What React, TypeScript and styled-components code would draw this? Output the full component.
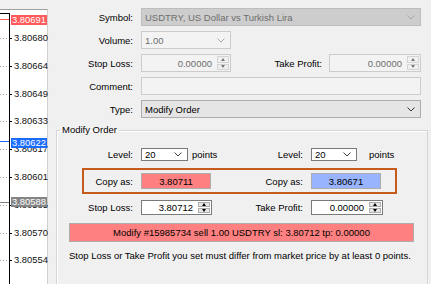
import React from "react";
import styled, { createGlobalStyle } from "styled-components";

const GlobalStyle = createGlobalStyle`
  body {
    margin: 0;
    background: #f0f0f0;
  }
`

const Screen = styled.div`
  display: flex;
  width: 431px;
  height: 284px;
  overflow: hidden;
  background: #f0f0f0;
  font-family: "Liberation Sans", Arial, sans-serif;
  font-size: 9.5px;
  color: #000;
`

/* ---------- chart strip ---------- */

const ChartStrip = styled.div`
  width: 48px;
  flex-shrink: 0;
  padding-top: 9px;
  box-sizing: border-box;
`

const ChartWindow = styled.div`
  position: relative;
  display: flex;
  height: 100%;
  background: #fff;
  border-top: 1px solid #a0a0a0;
  border-right: 1px solid #d0d0d0;
`

const PlotSvg = styled.svg`
  display: block;
  flex-shrink: 0;
`

const Axis = styled.div`
  display: flex;
  flex-direction: column;
  padding-top: 14px;
`

const AxisTick = styled.div`
  height: 27.8px;
  line-height: 27.8px;
  padding-left: 2px;
  font-size: 9.4px;
  color: #111;
`

const PriceTag = styled.div<{ $bg: string; $top: number }>`
  position: absolute;
  left: 11px;
  top: ${p => p.$top}px;
  width: 36px;
  height: 10px;
  line-height: 10px;
  background: ${p => p.$bg};
  color: #fff;
  font-size: 9.4px;
  text-align: center;
`

/* ---------- dialog ---------- */

const Dialog = styled.div`
  flex: 1;
  display: flex;
  flex-direction: column;
`

const Form = styled.div`
  display: grid;
  grid-template-columns: 85px 280px;
  grid-auto-rows: 18px;
  column-gap: 8px;
  row-gap: 5px;
  padding-top: 8px;
`

const Label = styled.div<{ $w?: number; $fill?: boolean }>`
  display: flex;
  align-items: center;
  justify-content: flex-end;
  ${p => p.$w ? `width: ${p.$w}px; flex-shrink: 0;` : ""}
  ${p => p.$fill ? "flex: 1; align-self: stretch; margin-right: 7px;" : ""}
  white-space: nowrap;
`

const FieldRow = styled.div`
  display: flex;
  align-items: center;
`

const Box = styled.div<{
  $bg: string;
  $border: string;
  $color?: string;
  $w?: number;
  $h?: number;
}>`
  display: flex;
  align-items: center;
  box-sizing: border-box;
  width: ${p => p.$w ? `${p.$w}px` : "100%"};
  height: ${p => p.$h ? `${p.$h}px` : "100%"};
  flex-shrink: 0;
  background: ${p => p.$bg};
  border: 1px solid ${p => p.$border};
  color: ${p => p.$color || "#000"};
  white-space: nowrap;
  overflow: hidden;
`

const BoxText = styled.span<{ $align?: "left" | "right" | "center" }>`
  flex: 1;
  padding: 0 3px;
  text-align: ${p => p.$align || "left"};
`

const Chevron = styled.svg`
  flex-shrink: 0;
  margin-right: 5px;
`

const SpinWrap = styled.div`
  display: flex;
  flex-direction: column;
  align-self: stretch;
  width: 12px;
  flex-shrink: 0;
  margin: 1px 1px 1px 2px;
  gap: 1px;
`

const SpinButton = styled.div<{ $bg: string; $line: string }>`
  flex: 1;
  display: flex;
  align-items: center;
  justify-content: center;
  background: ${p => p.$bg};
  border: 1px solid ${p => p.$line};
`

const Arrow = styled.span<{ $up?: boolean; $c: string }>`
  width: 0;
  height: 0;
  border-left: 2.5px solid transparent;
  border-right: 2.5px solid transparent;
  ${p => p.$up
    ? `border-bottom: 3px solid ${p.$c};`
    : `border-top: 3px solid ${p.$c};`}
`

const GroupBox = styled.fieldset`
  margin: 6px 3px 0 8px;
  padding: 8px 0 80px;
  border: 1px solid #d5d5d5;
  box-shadow: inset 1px 1px 0 #fff;
  min-width: 0;
`

const GroupTitle = styled.legend`
  margin-left: 3px;
  padding: 0 2px;
  line-height: 12px;
`

const PairRow = styled.div<{ $h: number; $mt?: number }>`
  position: relative;
  display: flex;
  align-items: center;
  height: ${p => p.$h}px;
  margin-top: ${p => p.$mt || 0}px;
`

const Highlight = styled.div`
  position: absolute;
  left: 25px;
  top: 0;
  width: 315px;
  height: 100%;
  box-sizing: border-box;
  border: 2px solid #c55a1a;
  pointer-events: none;
`

const Half = styled.div`
  display: flex;
  align-items: center;
  width: 170px;
  flex-shrink: 0;
  gap: 8px;
`

const Unit = styled.span<{ $ml: number }>`
  margin-left: ${p => p.$ml}px;
`

const ModifyButton = styled.div`
  margin: 7px 13px 0 12px;
  height: 19px;
  box-sizing: border-box;
  display: flex;
  align-items: center;
  justify-content: center;
  background: #ff8080;
  border: 1px solid #adadad;
  white-space: nowrap;
`

const Note = styled.div`
  margin: 8px 0 0 12px;
  line-height: 12px;
  white-space: nowrap;
`

const ChevronIcon = ({ color }: { color: string }) => (
  <Chevron width="8" height="5" viewBox="0 0 8 5">
    <polyline points="0.5,0.5 4,4 7.5,0.5" fill="none" stroke={color} strokeWidth="1" />
  </Chevron>
)

const Spinner = ({ active }: { active?: boolean }) => {
  const bg = active ? "#e6e6e6" : "#f0f0f0"
  const line = active ? "#adadad" : "#d4d4d4"
  const c = active ? "#000" : "#7a7a7a"
  return (
    <SpinWrap>
      <SpinButton $bg={bg} $line={line}><Arrow $up $c={c} /></SpinButton>
      <SpinButton $bg={bg} $line={line}><Arrow $c={c} /></SpinButton>
    </SpinWrap>
  )
}

const axisPrices = [
  "3.80680", "3.80664", "3.80649", "3.80633", "3.80617",
  "3.80601", "3.80585", "3.80570", "3.80554", "3.80538",
]

const ChartPanel = () => {
  const rows = axisPrices.map((_, i) => 28 + i * 27.8)
  return (
    <ChartStrip>
      <ChartWindow>
        <PlotSvg width="12" height="275" viewBox="0 0 12 275">
          <line x1="0" y1="3.5" x2="9" y2="3.5" stroke="#000" />
          <line x1="9.5" y1="3" x2="9.5" y2="275" stroke="#000" />
          {rows.map(y => (
            <g key={y}>
              <line x1="0" y1={Math.round(y) + 0.5} x2="8" y2={Math.round(y) + 0.5}
                stroke="#a8a8a8" strokeDasharray="1 2" />
              <line x1="10" y1={Math.round(y) + 0.5} x2="12" y2={Math.round(y) + 0.5} stroke="#000" />
            </g>
          ))}
          <line x1="0" y1="9.5" x2="9" y2="9.5" stroke="#ff5a5a" />
          <line x1="0" y1="131.5" x2="9" y2="131.5" stroke="#1a6cff" />
          <line x1="0" y1="192.5" x2="9" y2="192.5" stroke="#808080" />
        </PlotSvg>
        <Axis>
          {axisPrices.map(p => <AxisTick key={p}>{p}</AxisTick>)}
        </Axis>
        <PriceTag $bg="#ff5a5a" $top={5}>3.80691</PriceTag>
        <PriceTag $bg="#1a6cff" $top={128}>3.80622</PriceTag>
        <PriceTag $bg="#858585" $top={187}>3.80588</PriceTag>
      </ChartWindow>
    </ChartStrip>
  )
}

const App = (): JSX.Element => {
  return (
    <>
      <GlobalStyle />
      <Screen>
        <ChartPanel />
        <Dialog>
          <Form>
            <Label>Symbol:</Label>
            <Box $bg="#cdcdcd" $border="#bdbdbd" $color="#6d6d6d">
              <BoxText>USDTRY, US Dollar vs Turkish Lira</BoxText>
              <ChevronIcon color="#a8a8a8" />
            </Box>

            <Label>Volume:</Label>
            <FieldRow>
              <Box $bg="#f3f3f3" $border="#cccccc" $color="#6d6d6d" $w={90}>
                <BoxText>1.00</BoxText>
                <ChevronIcon color="#a8a8a8" />
              </Box>
            </FieldRow>

            <Label>Stop Loss:</Label>
            <FieldRow>
              <Box $bg="#f3f3f3" $border="#cccccc" $color="#6d6d6d" $w={90}>
                <BoxText $align="right">0.00000</BoxText>
                <Spinner />
              </Box>
              <Label $fill>Take Profit:</Label>
              <Box $bg="#f3f3f3" $border="#cccccc" $color="#6d6d6d" $w={92}>
                <BoxText $align="right">0.00000</BoxText>
                <Spinner />
              </Box>
            </FieldRow>

            <Label>Comment:</Label>
            <Box $bg="#f3f3f3" $border="#cccccc" />

            <Label>Type:</Label>
            <Box $bg="#e5e5e5" $border="#adadad">
              <BoxText>Modify Order</BoxText>
              <ChevronIcon color="#333" />
            </Box>
          </Form>

          <GroupBox>
            <GroupTitle>Modify Order</GroupTitle>

            <PairRow $h={20}>
              <Half>
                <Label $w={76}>Level:</Label>
                <Box $bg="#fff" $border="#7a7a7a" $w={47}>
                  <BoxText>20</BoxText>
                  <ChevronIcon color="#444" />
                </Box>
                <Unit $ml={-4}>points</Unit>
              </Half>
              <Half>
                <Label $w={76}>Level:</Label>
                <Box $bg="#fff" $border="#7a7a7a" $w={46}>
                  <BoxText>20</BoxText>
                  <ChevronIcon color="#444" />
                </Box>
                <Unit $ml={4}>points</Unit>
              </Half>
            </PairRow>

            <PairRow $h={26} $mt={4}>
              <Highlight />
              <Half>
                <Label $w={76}>Copy as:</Label>
                <Box $bg="#ff8080" $border="#adadad" $w={70} $h={16}>
                  <BoxText $align="center">3.80711</BoxText>
                </Box>
              </Half>
              <Half>
                <Label $w={76}>Copy as:</Label>
                <Box $bg="#99b4ff" $border="#adadad" $w={70} $h={16}>
                  <BoxText $align="center">3.80671</BoxText>
                </Box>
              </Half>
            </PairRow>

            <PairRow $h={18} $mt={4}>
              <Half>
                <Label $w={76}>Stop Loss:</Label>
                <Box $bg="#fff" $border="#7a7a7a" $w={71}>
                  <BoxText $align="right">3.80712</BoxText>
                  <Spinner active />
                </Box>
              </Half>
              <Half>
                <Label $w={76}>Take Profit:</Label>
                <Box $bg="#fff" $border="#7a7a7a" $w={72}>
                  <BoxText $align="right">0.00000</BoxText>
                  <Spinner active />
                </Box>
              </Half>
            </PairRow>

            <ModifyButton>Modify #15985734 sell 1.00 USDTRY sl: 3.80712 tp: 0.00000</ModifyButton>
            <Note>Stop Loss or Take Profit you set must differ from market price by at least 0 points.</Note>
          </GroupBox>
        </Dialog>
      </Screen>
    </>
  )
}

export default App;
